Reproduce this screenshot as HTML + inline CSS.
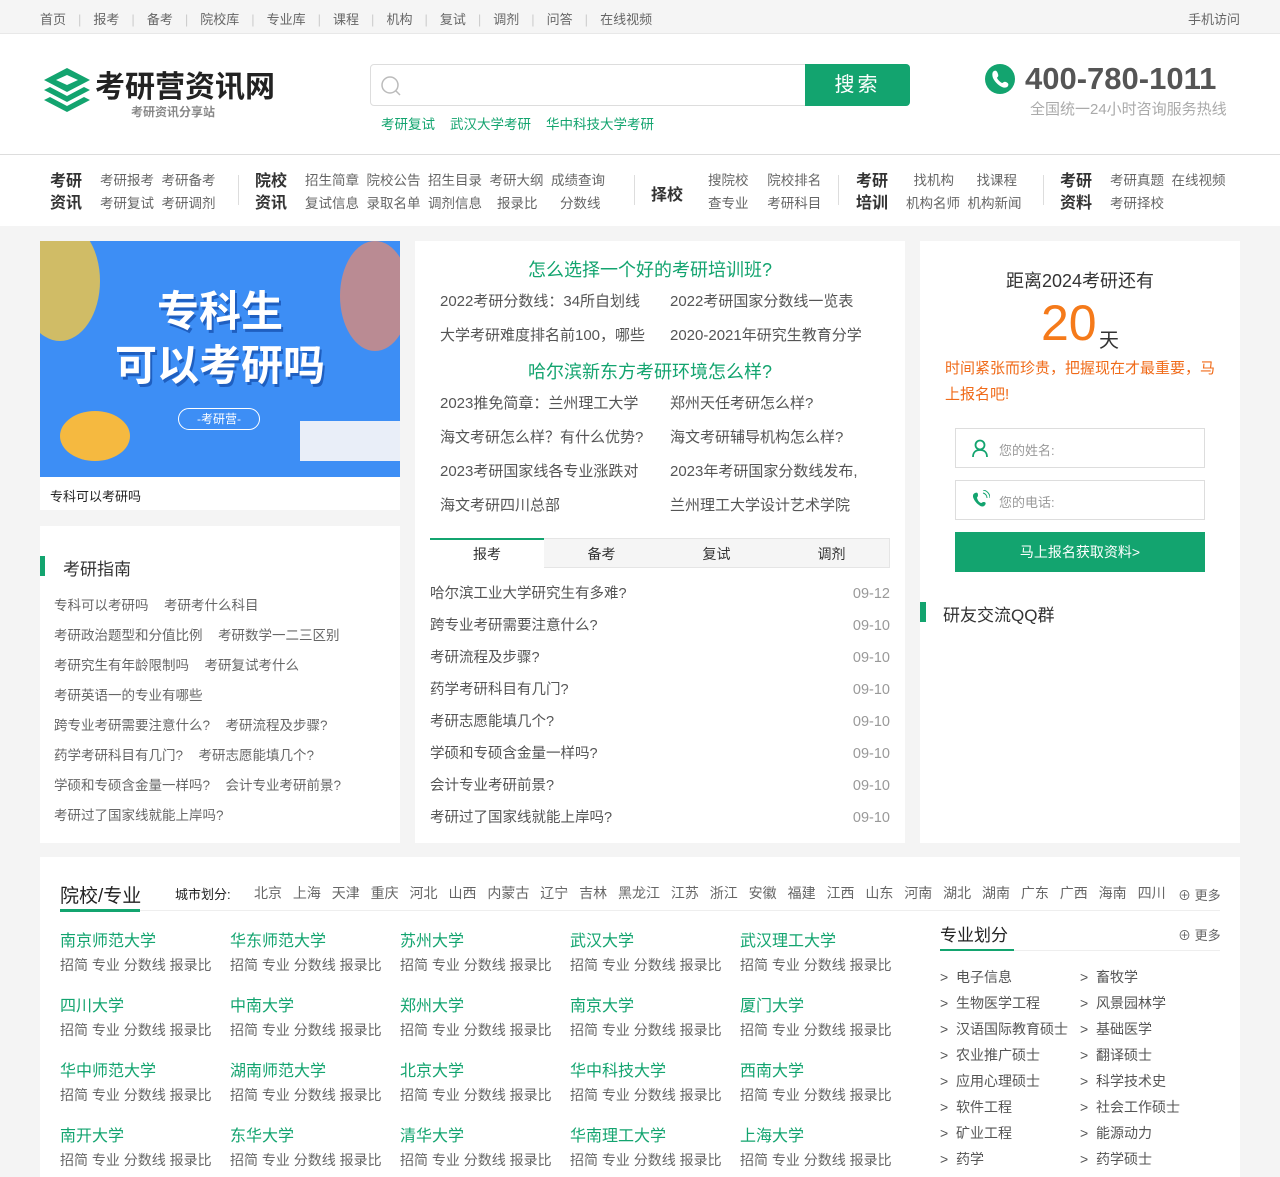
<!DOCTYPE html>
<html><head><meta charset="utf-8"><style>
*{margin:0;padding:0;box-sizing:border-box}
body{width:1280px;height:1167px;overflow:hidden;background:#f4f4f4;font-family:"Liberation Sans","Noto Sans CJK SC",sans-serif;color:#333;font-size:14px}
.abs{position:absolute}
.top{height:34px;background:#f5f5f5;border-bottom:1px solid #e8e8e8;position:relative}
.top .l{position:absolute;left:40px;top:9px;font-size:13px;color:#666}
.top .l span{margin:0 12px;color:#ccc}
.top .r{position:absolute;right:40px;top:9px;font-size:13px;color:#666}
.head{height:121px;background:#fff;border-bottom:1px solid #ddd;position:relative}
.nav{height:71px;background:#fff;position:relative}
.g{color:#13a46f}
.box{position:absolute;background:#fff}
.ml{font-size:15px;color:#555;line-height:34px}
.gl{position:absolute;left:14px;font-size:13.5px;color:#666;word-spacing:4px}
.nt{font-size:13.5px;line-height:23px;color:#666}
</style></head><body>
<div class="top"><div class="l">首页<span>|</span>报考<span>|</span>备考<span>|</span>院校库<span>|</span>专业库<span>|</span>课程<span>|</span>机构<span>|</span>复试<span>|</span>调剂<span>|</span>问答<span>|</span>在线视频</div><div class="r">手机访问</div></div>
<div class="head">
<svg class="abs" style="left:42px;top:32px" width="50" height="50" viewBox="0 0 50 50"><path d="M25 2 L48 14 L25 26 L2 14Z M25 9 L36 14 L25 19 L14 14Z" fill="#13a46f" fill-rule="evenodd"/><path d="M2 24 L8 21 L25 30 L42 21 L48 24 L25 36Z" fill="#13a46f"/><path d="M2 34 L8 31 L25 40 L42 31 L48 34 L25 46Z" fill="#13a46f"/></svg>
<div class="abs" style="left:95px;top:38px;font-size:30px;line-height:32px;font-weight:bold;color:#222">考研营资讯网</div>
<div class="abs" style="left:131px;top:71px;font-size:12px;line-height:14px;color:#888;font-weight:bold">考研资讯分享站</div>
<div class="abs" style="left:370px;top:30px;width:540px;height:42px;border:1px solid #ddd;border-radius:4px;background:#fff"></div>
<svg class="abs" style="left:380px;top:41px" width="22" height="22"><circle cx="10" cy="10" r="8" fill="none" stroke="#bbb" stroke-width="1.5"/><path d="M16 16l4 4" stroke="#bbb" stroke-width="1.5"/></svg>
<div class="abs" style="left:805px;top:30px;width:105px;height:42px;background:#13a46f;border-radius:0 4px 4px 0;color:#fff;font-size:20px;text-align:center;line-height:42px;letter-spacing:3px">搜索</div>
<div class="abs g" style="left:381px;top:79px;font-size:13.5px">考研复试&nbsp;&nbsp;&nbsp;&nbsp;武汉大学考研&nbsp;&nbsp;&nbsp;&nbsp;华中科技大学考研</div>
<svg class="abs" style="left:984px;top:29px" width="32" height="32" viewBox="0 0 32 32"><circle cx="16" cy="16" r="15" fill="#13a46f"/><path d="M10 8c2-1 3 0 4 3s-1 3-1 4c1 2 3 4 5 5 1 0 2-2 4-1s3 2 2 4c-1 2-4 2-6 1-4-2-7-5-9-9-1-3-1-6 1-7z" fill="#fff"/></svg>
<div class="abs" style="left:1025px;top:27px;font-size:31px;font-weight:bold;color:#555">400-780-1011</div>
<div class="abs" style="left:1030px;top:64px;font-size:15px;color:#aaa">全国统一24小时咨询服务热线</div>
</div>
<div class="nav">
<div class="abs" style="left:50px;top:16px;font-size:16px;font-weight:bold;line-height:22px">考研<br>资讯</div>
<div class="abs nt" style="left:100px;top:14px">考研报考&nbsp;&nbsp;考研备考<br>考研复试&nbsp;&nbsp;考研调剂</div>
<div class="abs" style="left:238px;top:20px;width:1px;height:30px;background:#ddd"></div>
<div class="abs" style="left:255px;top:16px;font-size:16px;font-weight:bold;line-height:22px">院校<br>资讯</div>
<div class="abs nt" style="left:305px;top:14px">招生简章&nbsp;&nbsp;院校公告&nbsp;&nbsp;招生目录&nbsp;&nbsp;考研大纲&nbsp;&nbsp;成绩查询<br>复试信息&nbsp;&nbsp;录取名单&nbsp;&nbsp;调剂信息&nbsp;&nbsp;&nbsp;&nbsp;报录比&nbsp;&nbsp;&nbsp;&nbsp;&nbsp;&nbsp;分数线</div>
<div class="abs" style="left:634px;top:20px;width:1px;height:30px;background:#ddd"></div>
<div class="abs" style="left:651px;top:26px;font-size:16px;font-weight:bold">择校</div>
<div class="abs nt" style="left:708px;top:14px">搜院校&nbsp;&nbsp;&nbsp;&nbsp;&nbsp;院校排名<br>查专业&nbsp;&nbsp;&nbsp;&nbsp;&nbsp;考研科目</div>
<div class="abs" style="left:838px;top:20px;width:1px;height:30px;background:#ddd"></div>
<div class="abs" style="left:856px;top:16px;font-size:16px;font-weight:bold;line-height:22px">考研<br>培训</div>
<div class="abs nt" style="left:906px;top:14px">&nbsp;&nbsp;找机构&nbsp;&nbsp;&nbsp;&nbsp;&nbsp;&nbsp;找课程<br>机构名师&nbsp;&nbsp;机构新闻</div>
<div class="abs" style="left:1043px;top:20px;width:1px;height:30px;background:#ddd"></div>
<div class="abs" style="left:1060px;top:16px;font-size:16px;font-weight:bold;line-height:22px">考研<br>资料</div>
<div class="abs nt" style="left:1110px;top:14px">考研真题&nbsp;&nbsp;在线视频<br>考研择校</div>
</div>

<div class="box" style="left:40px;top:241px;width:360px;height:269px">
<div class="abs" style="left:0;top:0;width:360px;height:236px;background:#3d8ef5;overflow:hidden">
<div class="abs" style="left:-20px;top:-20px;width:80px;height:120px;background:#f5c842;border-radius:50%;opacity:.8"></div>
<div class="abs" style="left:300px;top:0;width:70px;height:110px;background:#f08a6a;border-radius:50%;opacity:.7"></div>
<div class="abs" style="left:0;top:44px;width:360px;text-align:center;font-size:42px;font-weight:bold;color:#fff;line-height:54px;text-shadow:2px 3px 0 #1f5fc0">专科生<br>可以考研吗</div>
<div class="abs" style="left:138px;top:167px;width:82px;height:22px;border:1px solid #fff;border-radius:11px;color:#fff;font-size:12px;text-align:center;line-height:20px">-考研营-</div>
<div class="abs" style="left:20px;top:170px;width:70px;height:50px;background:#f5b940;border-radius:50%"></div>
<div class="abs" style="left:260px;top:180px;width:100px;height:40px;background:#e9eef8"></div>
</div>
<div class="abs" style="left:10px;top:245px;font-size:13px;color:#222">专科可以考研吗</div>
</div>
<div class="box" style="left:40px;top:526px;width:360px;height:317px">
<div class="abs" style="left:0;top:30px;width:5px;height:20px;background:#13a46f"></div>
<div class="abs" style="left:23px;top:29px;font-size:17px;color:#333">考研指南</div>
<div class="gl" style="top:68px">专科可以考研吗&nbsp;&nbsp;考研考什么科目</div>
<div class="gl" style="top:98px">考研政治题型和分值比例&nbsp;&nbsp;考研数学一二三区别</div>
<div class="gl" style="top:128px">考研究生有年龄限制吗&nbsp;&nbsp;考研复试考什么</div>
<div class="gl" style="top:158px">考研英语一的专业有哪些</div>
<div class="gl" style="top:188px">跨专业考研需要注意什么?&nbsp;&nbsp;考研流程及步骤?</div>
<div class="gl" style="top:218px">药学考研科目有几门?&nbsp;&nbsp;考研志愿能填几个?</div>
<div class="gl" style="top:248px">学硕和专硕含金量一样吗?&nbsp;&nbsp;会计专业考研前景?</div>
<div class="gl" style="top:278px">考研过了国家线就能上岸吗?</div>
</div>

<div class="box" style="left:415px;top:241px;width:490px;height:602px">
<div class="abs g" style="left:-10px;width:490px;top:15px;text-align:center;font-size:18px">怎么选择一个好的考研培训班?</div>
<div class="abs ml" style="left:25px;top:44px">2022考研分数线：34所自划线</div><div class="abs ml" style="left:255px;top:44px">2022考研国家分数线一览表</div>
<div class="abs ml" style="left:25px;top:78px">大学考研难度排名前100，哪些</div><div class="abs ml" style="left:255px;top:78px">2020-2021年研究生教育分学</div>
<div class="abs g" style="left:-10px;width:490px;top:117px;text-align:center;font-size:18px">哈尔滨新东方考研环境怎么样?</div>
<div class="abs ml" style="left:25px;top:146px">2023推免简章：兰州理工大学</div><div class="abs ml" style="left:255px;top:146px">郑州天任考研怎么样?</div>
<div class="abs ml" style="left:25px;top:180px">海文考研怎么样？有什么优势?</div><div class="abs ml" style="left:255px;top:180px">海文考研辅导机构怎么样?</div>
<div class="abs ml" style="left:25px;top:214px">2023考研国家线各专业涨跌对</div><div class="abs ml" style="left:255px;top:214px">2023年考研国家分数线发布,</div>
<div class="abs ml" style="left:25px;top:248px">海文考研四川总部</div><div class="abs ml" style="left:255px;top:248px">兰州理工大学设计艺术学院</div>
<div class="abs" style="left:15px;top:297px;width:460px;height:30px;background:#f5f5f5;border:1px solid #e5e5e5"></div>
<div class="abs" style="left:15px;top:297px;width:114px;height:31px;background:#fff;border-top:2px solid #13a46f"></div>
<div class="abs" style="left:15px;top:303px;width:114px;text-align:center;font-size:14px">报考</div>
<div class="abs" style="left:129px;top:303px;width:115px;text-align:center;font-size:14px">备考</div>
<div class="abs" style="left:244px;top:303px;width:115px;text-align:center;font-size:14px">复试</div>
<div class="abs" style="left:359px;top:303px;width:115px;text-align:center;font-size:14px">调剂</div>
<div class="abs" style="left:15px;top:337px;width:460px;font-size:14.5px;color:#555;line-height:32px">
<div>哈尔滨工业大学研究生有多难?<span style="float:right;color:#999">09-12</span></div>
<div>跨专业考研需要注意什么?<span style="float:right;color:#999">09-10</span></div>
<div>考研流程及步骤?<span style="float:right;color:#999">09-10</span></div>
<div>药学考研科目有几门?<span style="float:right;color:#999">09-10</span></div>
<div>考研志愿能填几个?<span style="float:right;color:#999">09-10</span></div>
<div>学硕和专硕含金量一样吗?<span style="float:right;color:#999">09-10</span></div>
<div>会计专业考研前景?<span style="float:right;color:#999">09-10</span></div>
<div>考研过了国家线就能上岸吗?<span style="float:right;color:#999">09-10</span></div>
</div>
</div>

<div class="box" style="left:920px;top:241px;width:320px;height:602px">
<div class="abs" style="left:0;width:320px;top:26px;text-align:center;font-size:18px;color:#333">距离2024考研还有</div>
<div class="abs" style="left:121px;top:52px;font-size:50px;color:#f57a1a;line-height:60px">20</div>
<div class="abs" style="left:179px;top:83px;font-size:20px;color:#333">天</div>
<div class="abs" style="left:25px;top:115px;width:280px;font-size:15px;color:#f06b1a;line-height:26px">时间紧张而珍贵，把握现在才最重要，马上报名吧!</div>
<div class="abs" style="left:35px;top:187px;width:250px;height:40px;border:1px solid #ddd"></div>
<svg class="abs" style="left:52px;top:198px" width="16" height="18"><circle cx="8" cy="6" r="4.5" fill="none" stroke="#13a46f" stroke-width="1.8"/><path d="M1 18c0-5 3-7 7-7s7 2 7 7" fill="none" stroke="#13a46f" stroke-width="1.8"/></svg>
<div class="abs" style="left:79px;top:199px;font-size:13px;color:#999">您的姓名:</div>
<div class="abs" style="left:35px;top:239px;width:250px;height:40px;border:1px solid #ddd"></div>
<svg class="abs" style="left:52px;top:249px" width="18" height="20"><path d="M3 3c2-1 3 0 3 2s-1 2-1 3c1 3 2 4 4 5 1 0 1-1 3-1s2 2 1 3c-1 2-4 2-6 0-3-2-5-5-6-8 0-2 0-3 2-4z" fill="#13a46f"/><path d="M11 3a5 5 0 0 1 4 5M11 0a8 8 0 0 1 7 8" fill="none" stroke="#13a46f" stroke-width="1"/></svg>
<div class="abs" style="left:79px;top:251px;font-size:13px;color:#999">您的电话:</div>
<div class="abs" style="left:35px;top:291px;width:250px;height:40px;background:#13a46f;color:#fff;font-size:14px;text-align:center;line-height:40px">马上报名获取资料&gt;</div>
<div class="abs" style="left:0;top:361px;width:6px;height:20px;background:#13a46f"></div>
<div class="abs" style="left:23px;top:360px;font-size:17px;color:#333">研友交流QQ群</div>
</div>

<div class="box" style="left:40px;top:857px;width:1200px;height:320px">
<div class="abs" style="left:20px;top:24px;font-size:19px;color:#222">院校/专业</div>
<div class="abs" style="left:20px;top:52px;width:80px;height:3px;background:#13a46f"></div>
<div class="abs" style="left:100px;top:53px;width:1080px;height:1px;background:#eee"></div>
<div class="abs" style="left:135px;top:27px;font-size:13px;color:#222">城市划分:</div>
<div class="abs" style="left:214px;top:26px;font-size:14px;color:#666;word-spacing:7px">北京 上海 天津 重庆 河北 山西 内蒙古 辽宁 吉林 黑龙江 江苏 浙江 安徽 福建 江西 山东 河南 湖北 湖南 广东 广西 海南 四川</div>
<div class="abs" style="left:1138px;top:28px;font-size:13px;color:#666">⊕ 更多</div>
<div class="abs" style="left:20px;top:70px;width:860px">
<style>.u{position:absolute;width:170px}.u b{display:block;font-weight:normal;color:#13a46f;font-size:16px}.u i{display:block;font-style:normal;color:#666;font-size:14px;margin-top:4px}</style>
<div class="u" style="left:0;top:0"><b>南京师范大学</b><i>招简 专业 分数线 报录比</i></div>
<div class="u" style="left:170px;top:0"><b>华东师范大学</b><i>招简 专业 分数线 报录比</i></div>
<div class="u" style="left:340px;top:0"><b>苏州大学</b><i>招简 专业 分数线 报录比</i></div>
<div class="u" style="left:510px;top:0"><b>武汉大学</b><i>招简 专业 分数线 报录比</i></div>
<div class="u" style="left:680px;top:0"><b>武汉理工大学</b><i>招简 专业 分数线 报录比</i></div>
<div class="u" style="left:0;top:65px"><b>四川大学</b><i>招简 专业 分数线 报录比</i></div>
<div class="u" style="left:170px;top:65px"><b>中南大学</b><i>招简 专业 分数线 报录比</i></div>
<div class="u" style="left:340px;top:65px"><b>郑州大学</b><i>招简 专业 分数线 报录比</i></div>
<div class="u" style="left:510px;top:65px"><b>南京大学</b><i>招简 专业 分数线 报录比</i></div>
<div class="u" style="left:680px;top:65px"><b>厦门大学</b><i>招简 专业 分数线 报录比</i></div>
<div class="u" style="left:0;top:130px"><b>华中师范大学</b><i>招简 专业 分数线 报录比</i></div>
<div class="u" style="left:170px;top:130px"><b>湖南师范大学</b><i>招简 专业 分数线 报录比</i></div>
<div class="u" style="left:340px;top:130px"><b>北京大学</b><i>招简 专业 分数线 报录比</i></div>
<div class="u" style="left:510px;top:130px"><b>华中科技大学</b><i>招简 专业 分数线 报录比</i></div>
<div class="u" style="left:680px;top:130px"><b>西南大学</b><i>招简 专业 分数线 报录比</i></div>
<div class="u" style="left:0;top:195px"><b>南开大学</b><i>招简 专业 分数线 报录比</i></div>
<div class="u" style="left:170px;top:195px"><b>东华大学</b><i>招简 专业 分数线 报录比</i></div>
<div class="u" style="left:340px;top:195px"><b>清华大学</b><i>招简 专业 分数线 报录比</i></div>
<div class="u" style="left:510px;top:195px"><b>华南理工大学</b><i>招简 专业 分数线 报录比</i></div>
<div class="u" style="left:680px;top:195px"><b>上海大学</b><i>招简 专业 分数线 报录比</i></div>
</div>
<div class="abs" style="left:900px;top:64px;font-size:17px;color:#222">专业划分</div>
<div class="abs" style="left:900px;top:92px;width:74px;height:2px;background:#13a46f"></div>
<div class="abs" style="left:974px;top:93px;width:206px;height:1px;background:#eee"></div>
<div class="abs" style="left:1138px;top:68px;font-size:13px;color:#666">⊕ 更多</div>
<div class="abs" style="left:900px;top:107px;font-size:14px;color:#555;line-height:26px">&gt;&nbsp; 电子信息<br>&gt;&nbsp; 生物医学工程<br>&gt;&nbsp; 汉语国际教育硕士<br>&gt;&nbsp; 农业推广硕士<br>&gt;&nbsp; 应用心理硕士<br>&gt;&nbsp; 软件工程<br>&gt;&nbsp; 矿业工程<br>&gt;&nbsp; 药学</div>
<div class="abs" style="left:1040px;top:107px;font-size:14px;color:#555;line-height:26px">&gt;&nbsp; 畜牧学<br>&gt;&nbsp; 风景园林学<br>&gt;&nbsp; 基础医学<br>&gt;&nbsp; 翻译硕士<br>&gt;&nbsp; 科学技术史<br>&gt;&nbsp; 社会工作硕士<br>&gt;&nbsp; 能源动力<br>&gt;&nbsp; 药学硕士</div>
</div>
</body></html>
